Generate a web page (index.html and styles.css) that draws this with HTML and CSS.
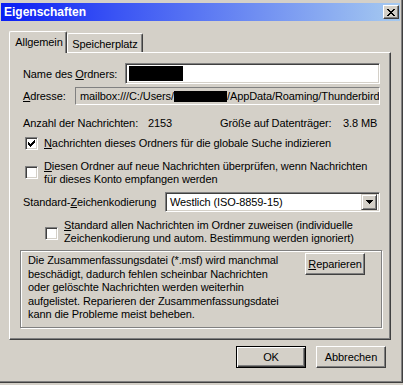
FILE: index.html
```html
<!DOCTYPE html>
<html lang="de">
<head>
  <meta charset="UTF-8">
  <meta name="viewport" content="width=device-width, initial-scale=1.0">
  <title>Eigenschaften</title>
  <link rel="stylesheet" href="styles.css">
</head>
<body>
  <div class="window">
    <div class="titlebar">
      <span class="title">Eigenschaften</span>
      <div class="close-btn">
        <svg width="8" height="7" viewBox="0 0 8 7" shape-rendering="crispEdges">
          <path d="M0 0h2v1h-2zM6 0h2v1h-2zM1 1h2v1h-2zM5 1h2v1h-2zM2 2h4v1h-4zM3 3h2v1h-2zM2 4h4v1h-4zM1 5h2v1h-2zM5 5h2v1h-2zM0 6h2v1h-2zM6 6h2v1h-2z" fill="#000"/>
        </svg>
      </div>
    </div>

    <div class="content">
      <div class="tabs">
        <div class="tab tab-active">Allgemein</div>
        <div class="tab tab-storage">Speicherplatz</div>
      </div>

      <div class="panel">
        <div class="row row-name">
          <label class="label-name">Name des <u>O</u>rdners:</label>
          <div class="textbox"><span class="redact redact-name"></span></div>
        </div>

        <div class="row row-address">
          <label class="label-address"><u>A</u>dresse:</label>
          <div class="readonly">mailbox:///C:/Users/<span class="redact redact-user"></span>/AppData/Roaming/Thunderbird/Profiles</div>
        </div>

        <div class="row row-stats">
          <span class="stat-count-label">Anzahl der Nachrichten:</span>
          <span class="stat-count">2153</span>
          <span class="stat-size-label">Größe auf Datenträger:</span>
          <span>3.8 MB</span>
        </div>

        <div class="check-row check-index">
          <span class="checkbox">
            <svg width="7" height="7" viewBox="0 0 7 7" shape-rendering="crispEdges">
              <path d="M6 0h1v1h-1zM5 1h2v1h-2zM0 2h1v1h-1zM4 2h3v1h-3zM0 3h2v1h-2zM3 3h3v1h-3zM0 4h5v1h-5zM1 5h3v1h-3zM2 6h1v1h-1z" fill="#000"/>
            </svg>
          </span>
          <span class="check-text"><u>N</u>achrichten dieses Ordners für die globale Suche indizieren</span>
        </div>

        <div class="check-row check-new">
          <span class="checkbox"></span>
          <span class="check-text"><u>D</u>iesen Ordner auf neue Nachrichten überprüfen, wenn Nachrichten<br>für dieses Konto empfangen werden</span>
        </div>

        <div class="row row-encoding">
          <label class="label-encoding">Standard-<u>Z</u>eichenkodierung</label>
          <div class="select">
            <span class="select-value">Westlich (ISO-8859-15)</span>
            <span class="select-arrow">
              <svg width="7" height="4" viewBox="0 0 7 4" shape-rendering="crispEdges">
                <path d="M0 0h7v1h-7zM1 1h5v1h-5zM2 2h3v1h-3zM3 3h1v1h-1z" fill="#000"/>
              </svg>
            </span>
          </div>
        </div>

        <div class="check-row check-default">
          <span class="checkbox"></span>
          <span class="check-text"><u>S</u>tandard allen Nachrichten im Ordner zuweisen (individuelle<br>Zeichenkodierung und autom. Bestimmung werden ignoriert)</span>
        </div>

        <div class="groupbox">
          <p class="repair-text">Die Zusammenfassungsdatei (*.msf) wird manchmal<br>beschädigt, dadurch fehlen scheinbar Nachrichten<br>oder gelöschte Nachrichten werden weiterhin<br>aufgelistet. Reparieren der Zusammenfassungsdatei<br>kann die Probleme meist beheben.</p>
          <button class="btn btn-repair"><u>R</u>eparieren</button>
        </div>
      </div>

      <div class="actions">
        <button class="btn btn-default">OK</button>
        <button class="btn">Abbrechen</button>
      </div>
    </div>
  </div>
</body>
</html>
```

FILE: styles.css
```css
body {
  margin: 0;
  background-color: #d4d0c8;
  font-family: "Liberation Sans", Arial, sans-serif;
  font-size: 11px;
  letter-spacing: -0.1px;
  color: #000;
}

u {
  text-decoration-thickness: 1px;
  text-underline-offset: 1px;
}

.window {
  width: 403px;
  height: 383px;
  box-sizing: border-box;
  padding: 3px 2px 0 1px;
  background-color: #d4d0c8;
  border-right: 1px solid #404040;
  border-bottom: 1px solid #404040;
  box-shadow: inset -1px -1px 0 #808080;
}

/* title bar */
.titlebar {
  height: 18px;
  display: flex;
  align-items: center;
  justify-content: space-between;
  padding: 0 1px 0 3px;
  background: linear-gradient(to right, #0a1ef4 0%, #3c56f4 30%, #a6caf0 100%);
}

.title {
  color: #fff;
  font-weight: bold;
  font-size: 12px;
  letter-spacing: 0;
}

.close-btn {
  width: 16px;
  height: 14px;
  box-sizing: border-box;
  display: flex;
  align-items: center;
  justify-content: center;
  background-color: #d4d0c8;
  border: 1px solid;
  border-color: #fff #404040 #404040 #fff;
  box-shadow: inset -1px -1px 0 #808080;
}

.content {
  padding: 10px 0 0 8px;
}

/* tabs */
.tabs {
  display: flex;
  align-items: flex-end;
  height: 21px;
}

.tab {
  height: 19px;
  box-sizing: border-box;
  display: flex;
  align-items: center;
  justify-content: center;
  background-color: #d4d0c8;
  border-top: 1px solid #fff;
  border-left: 1px solid #fff;
  border-right: 1px solid #404040;
  box-shadow: inset -1px 0 0 #808080;
  border-radius: 2px 2px 0 0;
}

.tab-active {
  position: relative;
  z-index: 1;
  width: 58px;
  height: 22px;
  margin-bottom: -1px;
  padding-bottom: 2px;
  padding-left: 2px;
}

.tab-storage {
  width: 76px;
  padding-top: 1px;
}

.panel {
  width: 382px;
  height: 288px;
  box-sizing: border-box;
  padding: 10px 8px 0 10px;
  border-top: 1px solid #fff;
  border-left: 1px solid #fff;
  border-right: 1px solid #404040;
  border-bottom: 1px solid #404040;
  box-shadow: inset -1px -1px 0 #808080;
}

/* rows */
.row {
  display: flex;
  align-items: center;
  margin: 0 2px 0 3px;
}

.row-name {
  height: 21px;
}

.label-name {
  width: 102px;
}

.textbox {
  flex: 1;
  height: 21px;
  box-sizing: border-box;
  display: flex;
  align-items: center;
  background-color: #fff;
  border: 1px solid;
  border-color: #808080 #fff #fff #808080;
  box-shadow: inset 1px 1px 0 #404040, inset -1px -1px 0 #d4d0c8;
}

.redact {
  display: inline-block;
  background-color: #000;
}

.redact-name {
  width: 54px;
  height: 15px;
  margin-left: 3px;
}

.row-address {
  height: 18px;
  margin-top: 3px;
}

.label-address {
  width: 52px;
}

.readonly {
  flex: 1;
  height: 18px;
  box-sizing: border-box;
  padding-left: 4px;
  line-height: 16px;
  white-space: nowrap;
  overflow: hidden;
  border: 1px solid;
  border-color: #808080 #fff #fff #808080;
}

.redact-user {
  width: 53px;
  height: 11px;
  vertical-align: -2px;
}

.row-stats {
  height: 13px;
  margin-top: 12px;
  line-height: 13px;
}

.stat-count-label {
  width: 125px;
}

.stat-count {
  width: 72px;
}

.stat-size-label {
  width: 123px;
}

/* checkboxes */
.check-row {
  display: flex;
  align-items: center;
  margin-left: 5px;
  line-height: 13px;
}

.checkbox {
  width: 13px;
  height: 13px;
  flex-shrink: 0;
  box-sizing: border-box;
  display: flex;
  align-items: center;
  justify-content: center;
  margin-right: 6px;
  background-color: #fff;
  border: 1px solid;
  border-color: #808080 #fff #fff #808080;
  box-shadow: inset 1px 1px 0 #404040, inset -1px -1px 0 #d4d0c8;
}

.check-index {
  margin-top: 7px;
}

.check-new {
  margin-top: 10px;
}

.check-new .checkbox {
  margin-top: -2px;
}

.check-default {
  margin-top: 7px;
  margin-left: 25px;
}

.check-default .checkbox {
  margin-top: 2px;
}

/* encoding select */
.row-encoding {
  height: 20px;
  margin-top: 6px;
}

.label-encoding {
  width: 142px;
}

.select {
  flex: 1;
  height: 20px;
  box-sizing: border-box;
  display: flex;
  align-items: center;
  background-color: #fff;
  border: 1px solid;
  border-color: #808080 #fff #fff #808080;
  box-shadow: inset 1px 1px 0 #404040, inset -1px -1px 0 #d4d0c8;
  padding: 2px;
}

.select-value {
  flex: 1;
  padding-left: 2px;
}

.select-arrow {
  width: 16px;
  height: 16px;
  box-sizing: border-box;
  display: flex;
  align-items: center;
  justify-content: center;
  background-color: #d4d0c8;
  border: 1px solid;
  border-color: #d4d0c8 #404040 #404040 #d4d0c8;
  box-shadow: inset 1px 1px 0 #fff, inset -1px -1px 0 #808080;
}

/* repair group */
.groupbox {
  height: 78px;
  box-sizing: border-box;
  margin-top: 5px;
  display: flex;
  align-items: flex-start;
  padding: 3px 16px 0 7px;
  border: 1px solid #808080;
  box-shadow: inset 1px 1px 0 #fff, 1px 1px 0 #fff;
}

.repair-text {
  margin: 0;
  line-height: 13.5px;
}

.btn {
  height: 22px;
  box-sizing: border-box;
  padding: 0;
  font-family: inherit;
  font-size: 11px;
  letter-spacing: inherit;
  color: #000;
  background-color: #d4d0c8;
  border: 1px solid;
  border-color: #fff #404040 #404040 #fff;
  border-radius: 0;
  box-shadow: inset -1px -1px 0 #808080;
}

.btn-repair {
  width: 60px;
  margin-left: auto;
  margin-top: -1px;
}

.actions {
  width: 382px;
  box-sizing: border-box;
  display: flex;
  justify-content: flex-end;
  gap: 10px;
  margin-top: 6px;
  padding-right: 5px;
}

.actions .btn {
  width: 70px;
}

.btn-default {
  border-color: #000;
  box-shadow: inset 1px 1px 0 #fff, inset -1px -1px 0 #404040, inset -2px -2px 0 #808080;
}
```
